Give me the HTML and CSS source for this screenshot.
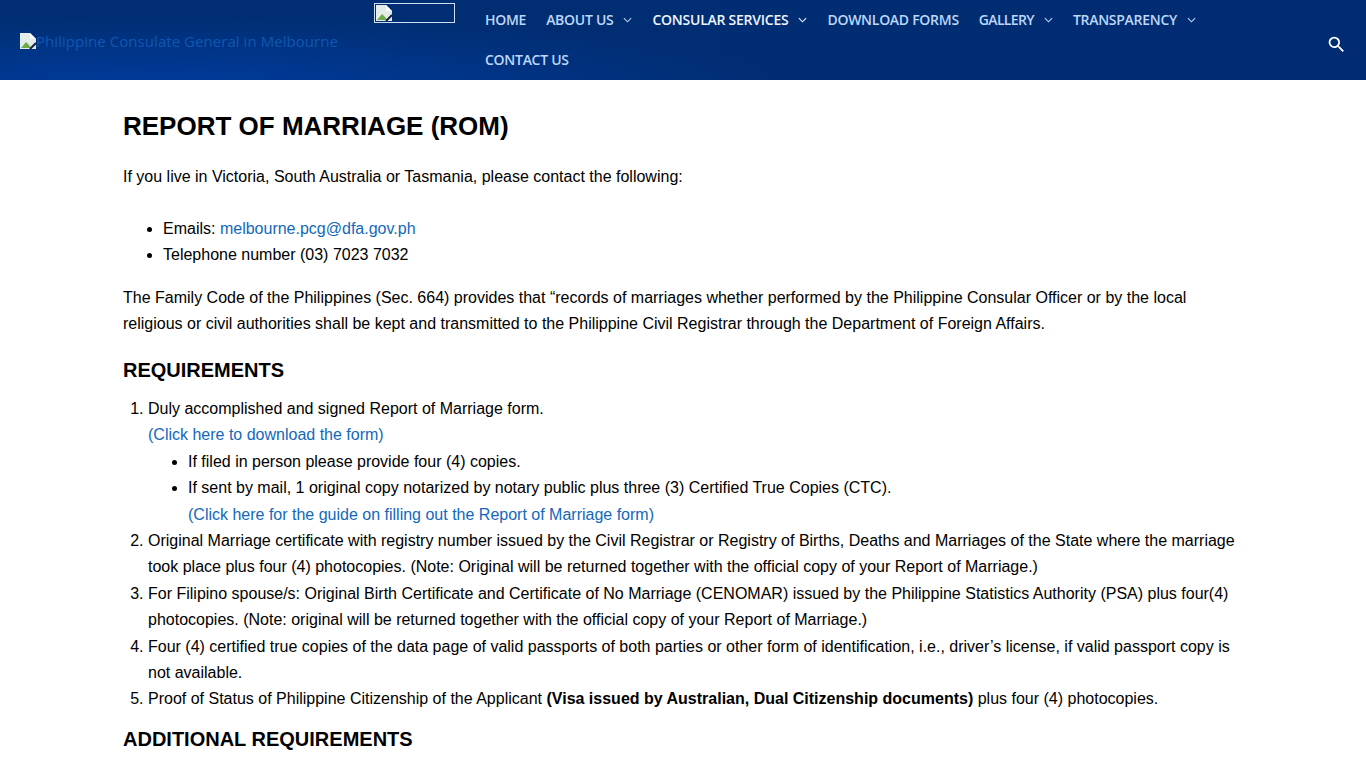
FILE: index.html
```html
<!DOCTYPE html>
<html lang="en">
<head>
  <meta charset="UTF-8">
  <meta name="viewport" content="width=device-width, initial-scale=1.0">
  <title>Report of Marriage (ROM)</title>
  <link rel="stylesheet" href="styles.css">
</head>
<body>
  <header class="site-header">
    <a class="logo" href="#">
      <svg class="broken-img" width="16" height="16" viewBox="0 0 16 16"><path d="M0 0h10l6 6v10H0z" fill="#e4ecea"/><path d="M10 0l6 6h-6z" fill="#fff"/><path d="M1 15l5-6 3 3 2 3z" fill="#6eaa4a"/><path d="M10 16l6-6" stroke="#12233f" stroke-width="2"/></svg><span>Philippine Consulate General in Melbourne</span>
    </a>
    <div class="logo-box">
      <svg class="broken-img" width="16" height="16" viewBox="0 0 16 16"><path d="M0 0h10l6 6v10H0z" fill="#e4ecea"/><path d="M10 0l6 6h-6z" fill="#fff"/><path d="M1 15l5-6 3 3 2 3z" fill="#6eaa4a"/><path d="M10 16l6-6" stroke="#12233f" stroke-width="2"/></svg>
    </div>
    <nav class="main-nav">
      <a href="#">HOME</a>
      <a href="#">ABOUT US <svg class="caret" viewBox="0 0 10 6"><path d="M1 1l4 4 4-4" fill="none" stroke="currentColor" stroke-width="1.2"/></svg></a>
      <a href="#" class="current">CONSULAR SERVICES <svg class="caret" viewBox="0 0 10 6"><path d="M1 1l4 4 4-4" fill="none" stroke="currentColor" stroke-width="1.2"/></svg></a>
      <a href="#">DOWNLOAD FORMS</a>
      <a href="#" class="gallery">GALLERY <svg class="caret" viewBox="0 0 10 6"><path d="M1 1l4 4 4-4" fill="none" stroke="currentColor" stroke-width="1.2"/></svg></a>
      <a href="#">TRANSPARENCY <svg class="caret" viewBox="0 0 10 6"><path d="M1 1l4 4 4-4" fill="none" stroke="currentColor" stroke-width="1.2"/></svg></a>
      <a href="#">CONTACT US</a>
    </nav>
    <a class="search" href="#">
      <svg width="21" height="21" viewBox="0 0 24 24"><path fill="#fff" d="M15.5 14h-.79l-.28-.27A6.47 6.47 0 0 0 16 9.5 6.5 6.5 0 1 0 9.5 16c1.61 0 3.09-.59 4.23-1.57l.27.28v.79l5 4.99L20.49 19l-4.99-5zm-6 0C7.01 14 5 11.99 5 9.5S7.01 5 9.5 5 14 7.01 14 9.5 11.99 14 9.5 14z"/></svg>
    </a>
  </header>

  <main class="content">
    <h1>REPORT OF MARRIAGE (ROM)</h1>
    <p class="intro">If you live in Victoria, South Australia or Tasmania, please contact the following:</p>
    <ul class="contact-list">
      <li>Emails: <a href="#">melbourne.pcg@dfa.gov.ph</a></li>
      <li>Telephone number (03) 7023 7032</li>
    </ul>
    <p>The Family Code of the Philippines (Sec. 664) provides that “records of marriages whether performed by the Philippine Consular Officer or by the local religious or civil authorities shall be kept and transmitted to the Philippine Civil Registrar through the Department of Foreign Affairs.</p>

    <h2>REQUIREMENTS</h2>
    <ol>
      <li>Duly accomplished and signed Report of Marriage form.<br>
        <a href="#">(Click here to download the form)</a>
        <ul>
          <li>If filed in person please provide four (4) copies.</li>
          <li>If sent by mail, 1 original copy notarized by notary public plus three (3) Certified True Copies (CTC).<br>
            <a href="#">(Click here for the guide on filling out the Report of Marriage form)</a></li>
        </ul>
      </li>
      <li>Original Marriage certificate with registry number issued by the Civil Registrar or Registry of Births, Deaths and Marriages of the State where the marriage took place plus four (4) photocopies. (Note: Original will be returned together with the official copy of your Report of Marriage.)</li>
      <li>For Filipino spouse/s: Original Birth Certificate and Certificate of No Marriage (CENOMAR) issued by the Philippine Statistics Authority (PSA) plus four(4) photocopies. (Note: original will be returned together with the official copy of your Report of Marriage.)</li>
      <li>Four (4) certified true copies of the data page of valid passports of both parties or other form of identification, i.e., driver’s license, if valid passport copy is not available.</li>
      <li>Proof of Status of Philippine Citizenship of the Applicant <strong>(Visa issued by Australian, Dual Citizenship documents)</strong> plus four (4) photocopies.</li>
    </ol>

    <h2 class="additional">ADDITIONAL REQUIREMENTS</h2>
  </main>
</body>
</html>
```

FILE: styles.css
```css
html {
  overflow: hidden;
}
body {
  margin: 0;
  height: 768px;
  overflow: hidden;
  background-color: #fff;
  color: #000;
  font-family: "Liberation Sans", Arial, sans-serif;
  font-size: 16px;
  line-height: 26.4px;
}
a {
  color: #1268bc;
  text-decoration: none;
}

/* Header */
.site-header {
  display: flex;
  align-items: flex-start;
  height: 80px;
  padding-left: 20px;
  background-color: #012c73;
  background-image: radial-gradient(ellipse 620px 70px at 160px 85px, #003b9c 0%, rgba(0, 59, 156, 0) 100%), linear-gradient(90deg, #012e72 0%, #012c73 100%);
  font-family: "Open Sans", "Noto Sans", sans-serif;
}
.logo {
  display: flex;
  align-items: center;
  width: 354px;
  flex: none;
  height: 82px;
  color: #0e58b4;
  font-size: 15px;
  letter-spacing: 0.05px;
  white-space: nowrap;
}
.broken-img {
  flex: none;
}
.logo-box {
  flex: none;
  box-sizing: border-box;
  width: 81px;
  height: 20px;
  margin-top: 3px;
  padding: 1px;
  border: 1px solid #cfe0f5;
  line-height: 0;
}
.main-nav {
  display: flex;
  flex-wrap: wrap;
  flex: none;
  width: 760px;
  margin-left: 20px;
}
.main-nav a {
  display: flex;
  align-items: center;
  gap: 10px;
  height: 40px;
  padding: 0 10px;
  color: #bdd7f8;
  font-size: 14px;
  font-weight: 600;
  letter-spacing: -0.28px;
  white-space: nowrap;
}
.main-nav a.current {
  color: #eef5ff;
  letter-spacing: -0.25px;
}
.main-nav a.gallery {
  letter-spacing: -0.65px;
}
.caret {
  width: 9px;
  height: 6px;
}
.search {
  display: flex;
  margin: 34px 0 0 91px;
}

/* Page content */
.content {
  width: 1120px;
  margin-left: 123px;
}
h1 {
  margin: 28px 0 0;
  font-size: 26px;
  line-height: 36px;
}
h2 {
  margin: 17.4px 0 0;
  font-size: 20px;
  line-height: 30px;
}
p {
  margin: 0;
}
.intro {
  margin-top: 19.6px;
  margin-bottom: 26px;
}
.contact-list {
  margin: 0 0 16px;
  padding-left: 40px;
}
ol {
  margin: 11px 0 0;
  padding-left: 25px;
}
ol ul {
  margin: 0;
  padding-left: 40px;
  list-style-type: disc;
}
.additional {
  margin-top: 11.2px;
}
```
